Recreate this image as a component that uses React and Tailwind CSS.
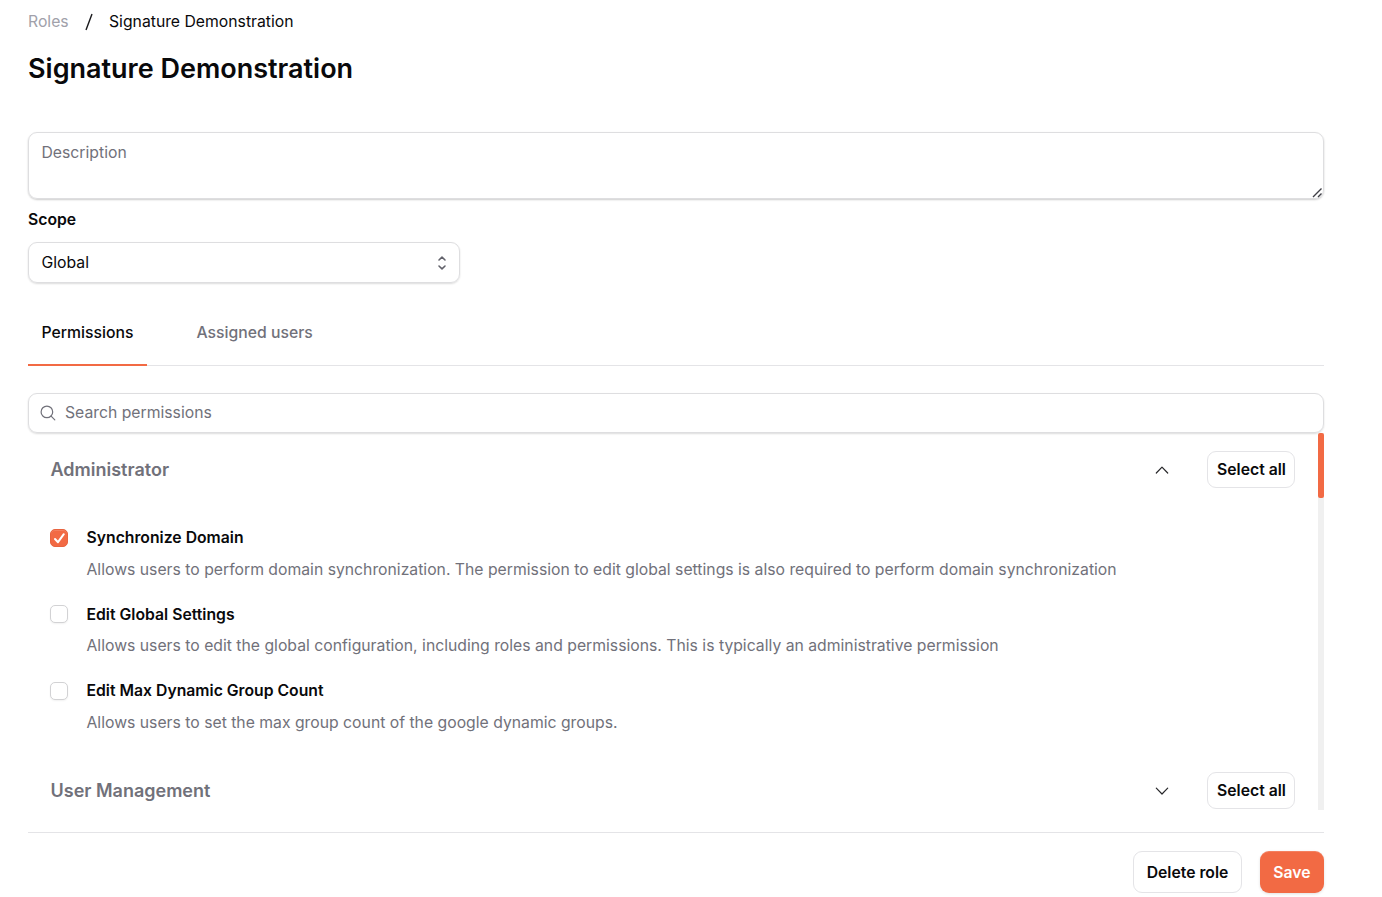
import React from 'react';

const permissions = [
  {
    title: 'Synchronize Domain',
    text: 'Allows users to perform domain synchronization. The permission to edit global settings is also required to perform domain synchronization',
    checked: true,
    gap: 'pt-[38px]',
    box: 'mt-[3px]',
    lead: 'mt-[9px]',
  },
  {
    title: 'Edit Global Settings',
    text: 'Allows users to edit the global configuration, including roles and permissions. This is typically an administrative permission',
    gap: 'pt-[22px]',
    box: 'mt-[2px]',
    lead: 'mt-[8px]',
  },
  {
    title: 'Edit Max Dynamic Group Count',
    text: 'Allows users to set the max group count of the google dynamic groups.',
    gap: 'pt-[22px]',
    box: 'mt-[3px]',
    lead: 'mt-[9px]',
  },
];

function Checkbox({ checked, label, offset }) {
  return (
    <span
      role="checkbox"
      aria-checked={!!checked}
      aria-label={label}
      className={`${offset} -ml-[0.5px] flex size-[18px] shrink-0 items-center justify-center rounded-[5px] border ${
        checked
          ? 'border-[#e8643f] bg-[#f26a44] shadow-[inset_0_1px_0_rgba(255,255,255,0.15)]'
          : 'border-[#d2d2d4] bg-white shadow-[0_1px_2px_rgba(0,0,0,0.06)]'
      }`}
    >
      {checked && (
        <svg className="shrink-0" width="16" height="16" viewBox="0 0 16 16" fill="none" stroke="#fff" strokeWidth="2" strokeLinecap="round" strokeLinejoin="round">
          <path d="M4 9 L7 12.2 L12.8 4.2" />
        </svg>
      )}
    </span>
  );
}

function Chevron({ up }) {
  return (
    <svg className="mr-[38px]" width="14" height="8" viewBox="0 0 14 8" fill="none" stroke="#27272a" strokeWidth="1.2" strokeLinecap="round" strokeLinejoin="round">
      <path d={up ? 'M1.3 7 L7 1.2 L12.7 7' : 'M1.3 1.2 L7 7 L12.7 1.2'} />
    </svg>
  );
}

function GroupHeader({ title, up }) {
  return (
    <div className="flex h-[37px] items-center">
      <h2 className="flex-1 text-[18px] leading-[27px] font-semibold text-[#71717a]">{title}</h2>
      <Chevron up={up} />
      <button className="h-[37px] w-[88px] rounded-[9px] border border-[#e4e4e7] pl-px font-semibold whitespace-nowrap text-[#09090b]">Select all</button>
    </div>
  );
}

export default function App() {
  return (
    <main className="h-[897px] w-[1382px] overflow-hidden bg-white pr-[58px] pl-[28px] font-['Inter',sans-serif] text-[15.75px] leading-[23px] text-[#09090b]">
      <nav className="flex h-[42px] items-center">
        <span className="w-[57px] text-[#a1a1aa]">Roles</span>
        <svg className="mt-[2px] mr-[16px]" width="8" height="18" viewBox="0 0 8 18" fill="none" stroke="#18181b" strokeWidth="1.4">
          <path d="M7 1 L1 17" />
        </svg>
        <span>Signature Demonstration</span>
      </nav>
      <h1 className="mt-[9px] text-[27px] leading-[36px] font-semibold">Signature Demonstration</h1>

      <div className="relative mt-[45px] h-[67px]">
        <textarea
          placeholder="Description"
          className="block h-[67px] w-full resize-none rounded-[9px] border border-[#dedee0] px-[12.5px] py-[8px] shadow-[0_1px_2px_rgba(0,0,0,0.2)] outline-none placeholder:text-[#71717a]"
        />
        <svg className="absolute right-[1px] bottom-[1px]" width="11" height="11" viewBox="0 0 11 11" fill="none" stroke="#3f3f46" strokeWidth="1.4">
          <path d="M1 10 L9.5 1.5 M6 10 L9.5 6.5" />
        </svg>
      </div>
      <div className="mt-[9px] font-semibold">Scope</div>
      <div className="mt-[11px] flex h-[41px] w-[432px] items-center justify-between rounded-[9px] border border-[#dedee0] pr-[12px] pl-[12.5px] shadow-[0_1px_2px_rgba(0,0,0,0.14)]">
        <span>Global</span>
        <svg width="10" height="14" viewBox="0 0 10 14" fill="none" stroke="#62626b" strokeWidth="1.6" strokeLinecap="round" strokeLinejoin="round">
          <path d="M2 4 L5 1.2 L8 4 M2 10 L5 12.8 L8 10" />
        </svg>
      </div>

      <div className="mt-[38px] flex h-[45px] border-b border-[#e4e4e7] font-medium">
        <div className="-mb-px h-[45px] w-[119px] border-b-2 border-[#f26a44] pl-[13.5px]">Permissions</div>
        <div className="ml-[49.5px] text-[#71717a]">Assigned users</div>
      </div>

      <div className="mt-[27px] flex h-[40px] items-center rounded-[9px] border border-[#dedee0] pl-[11px] shadow-[0_1px_2px_rgba(0,0,0,0.14)]">
        <svg width="16" height="16" viewBox="0 0 16 16" fill="none" stroke="#71717a" strokeWidth="1.2" strokeLinecap="round">
          <circle cx="6.9" cy="6.9" r="5.8" />
          <path d="M11.1 11.1 L14.8 14.8" />
        </svg>
        <span className="mb-[2px] ml-[9px] text-[#71717a]">Search permissions</span>
      </div>

      <section className="flex h-[377px] overflow-hidden">
        <div className="w-[1267px] pt-[18px] pl-[22.5px]">
          <GroupHeader title="Administrator" up />
          {permissions.map((p) => (
            <div key={p.title} className={`flex ${p.gap}`}>
              <Checkbox checked={p.checked} label={p.title} offset={p.box} />
              <div className="ml-[18.5px] whitespace-nowrap">
                <div className="font-semibold">{p.title}</div>
                <div className={`text-[#71717a] ${p.lead}`}>{p.text}</div>
              </div>
            </div>
          ))}
          <div className="pt-[38px]">
            <GroupHeader title="User Management" />
          </div>
        </div>
        <div className="ml-auto w-[6px] bg-[#f0f0f0]">
          <div className="h-[65px] rounded-[2px] bg-[#f26a44]" />
        </div>
      </section>

      <footer className="mt-[22px] flex justify-end gap-[18px] border-t border-[#e4e4e7] pt-[18px] font-semibold">
        <button className="h-[42px] w-[109px] rounded-[9px] border border-[#e4e4e7]">Delete role</button>
        <button className="h-[42px] w-[64px] rounded-[9px] bg-[#f26a44] text-white shadow-[0_1px_3px_rgba(0,0,0,0.12),inset_0_1px_0_rgba(255,255,255,0.15)]">Save</button>
      </footer>
    </main>
  );
}
